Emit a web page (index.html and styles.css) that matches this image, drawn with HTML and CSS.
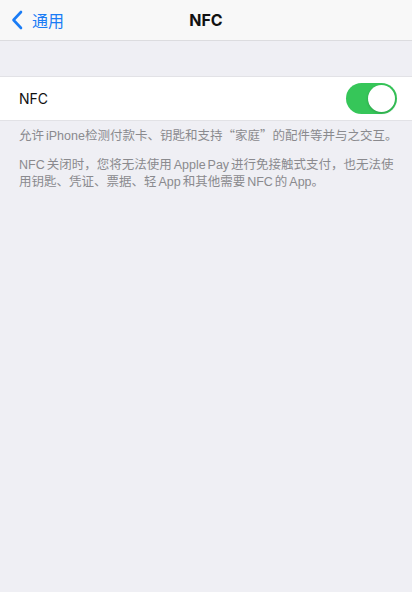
FILE: index.html
```html
<!DOCTYPE html>
<html lang="zh-CN">
<head>
<meta charset="utf-8">
<title>NFC</title>
<link rel="stylesheet" href="styles.css">
</head>
<body>
  <header class="navbar">
    <a class="back" href="#">
      <svg class="chevron" width="12" height="20" viewBox="0 0 12 20" aria-hidden="true">
        <path d="M10 2 L2.5 10 L10 18" fill="none" stroke="#1a7cf5" stroke-width="2.6" stroke-linecap="round" stroke-linejoin="round"/>
      </svg>
      <span>通用</span>
    </a>
    <h1 class="title">NFC</h1>
  </header>

  <main class="content">
    <section class="group">
      <div class="row">
        <span class="row-label">NFC</span>
        <span class="switch on"><span class="knob"></span></span>
      </div>
    </section>
    <p class="footnote">允许 iPhone检测付款卡、钥匙和支持<span class="cjk">“家庭”</span>的配件等并与之交互。</p>
    <p class="footnote">NFC 关闭时，您将无法使用 Apple Pay 进行免接触式支付，也无法使用钥匙、凭证、票据、轻 App 和其他需要 NFC 的 App。</p>
  </main>
</body>
</html>
```
FILE: styles.css
```css
* { box-sizing: border-box; }

html, body {
  margin: 0;
  padding: 0;
  height: 100%;
}

body {
  background: #efeff4;
  font-family: "Inter", "Noto Sans CJK SC", sans-serif;
  color: #111;
}

.navbar {
  position: relative;
  height: 41px;
  background: #f8f8f8;
  border-bottom: 1px solid #dcdcdf;
  display: flex;
  align-items: center;
  padding-left: 11px;
}

.back {
  display: flex;
  align-items: center;
  gap: 9px;
  color: #1a7cf5;
  text-decoration: none;
  font-size: 16px;
}

.chevron { display: block; margin-top: -1px; }

.title {
  position: absolute;
  left: 0;
  right: 0;
  top: 0;
  height: 40px;
  margin: 0;
  display: flex;
  align-items: center;
  justify-content: center;
  font-size: 16px;
  font-weight: 700;
  pointer-events: none;
}

.content {
  padding-top: 35px;
}

.group {
  background: #fff;
  border-top: 1px solid #e2e2e6;
  border-bottom: 1px solid #e2e2e6;
}

.row {
  height: 43px;
  display: flex;
  align-items: center;
  justify-content: space-between;
  padding: 0 15px 0 19px;
}

.row-label {
  font-size: 14px;
}

.switch {
  position: relative;
  width: 51px;
  height: 31px;
  border-radius: 16px;
  background: #e5e5ea;
}

.switch.on { background: #36c659; }

.knob {
  position: absolute;
  top: 2px;
  right: 2px;
  width: 27px;
  height: 27px;
  border-radius: 50%;
  background: #fff;
  box-shadow: 0 1px 3px rgba(0, 0, 0, 0.2);
}

.footnote {
  margin: 0;
  padding: 5px 10px 0 19px;
  font-family: "Liberation Sans", "Noto Sans CJK SC", sans-serif;
  font-size: 12.5px;
  line-height: 17px;
  word-spacing: -1.5px;
  color: #8a8a8e;
}

/* full-width quotation marks */
.cjk {
  font-family: "Noto Sans CJK SC", sans-serif;
}

.footnote + .footnote {
  padding-top: 12px;
}
```
